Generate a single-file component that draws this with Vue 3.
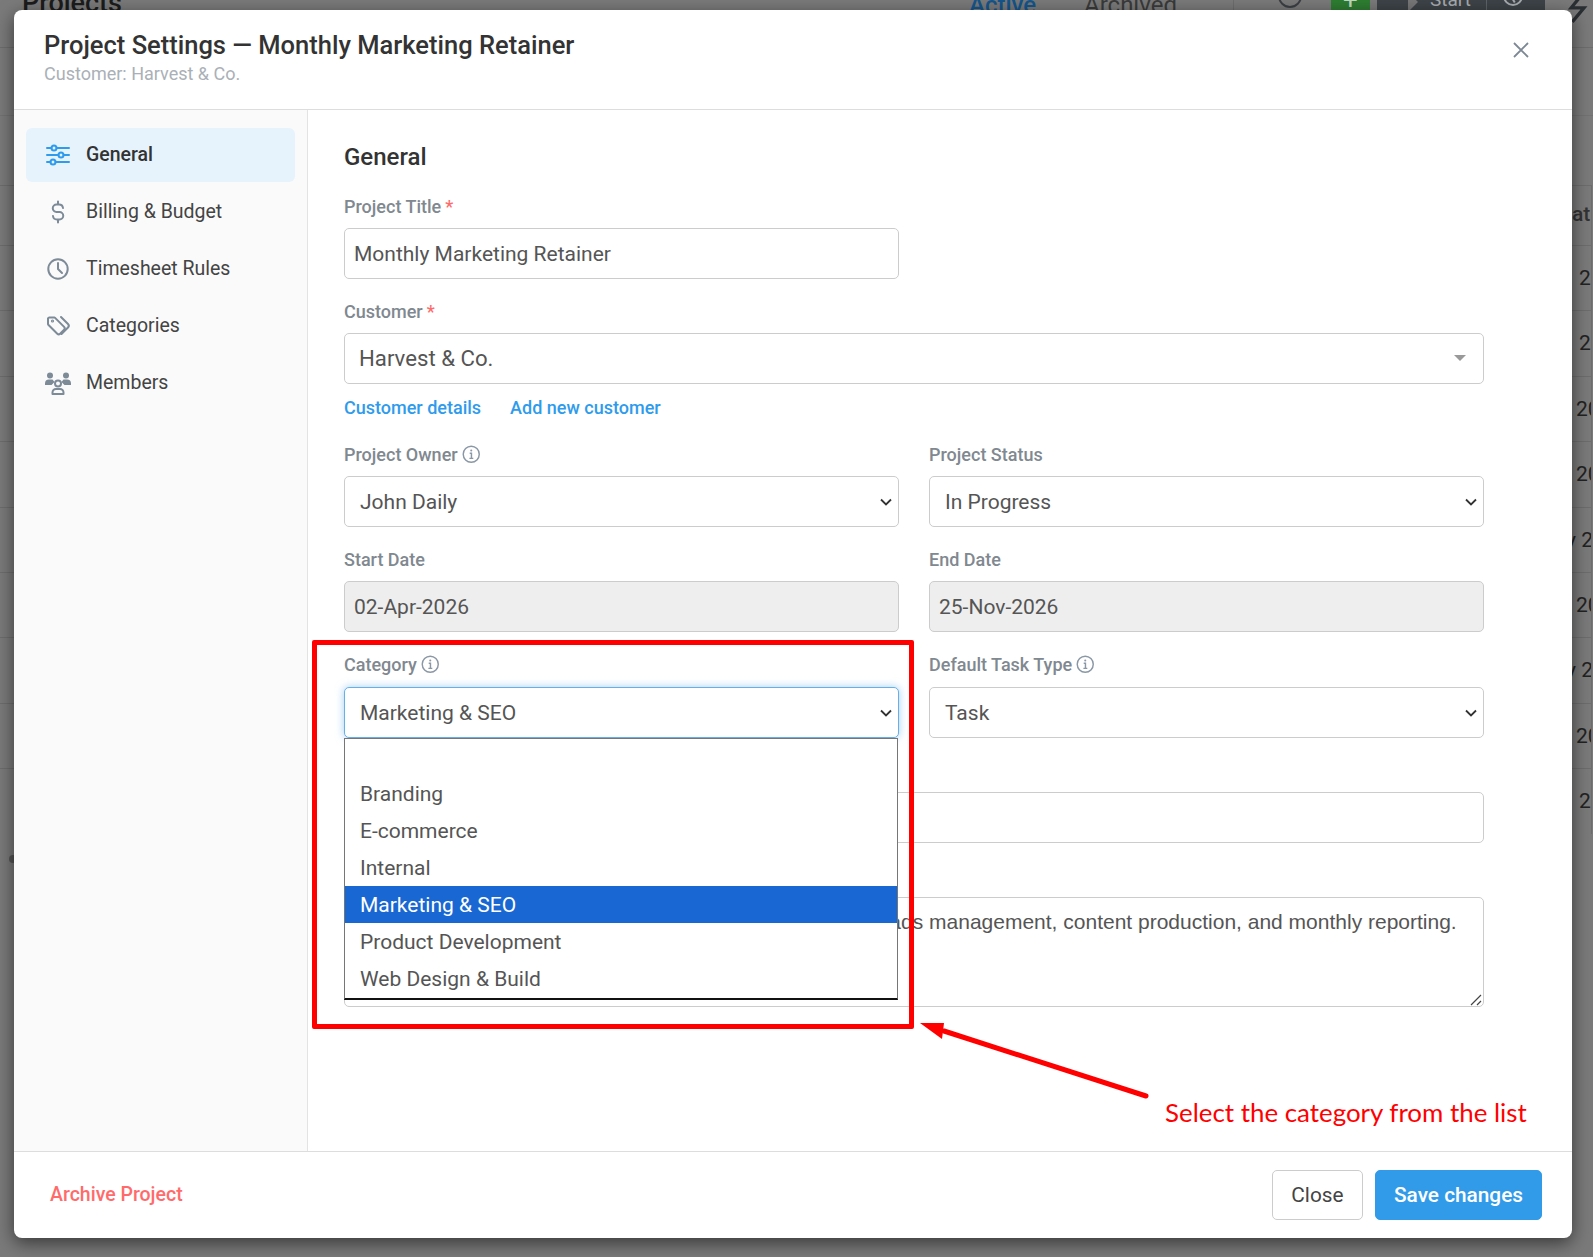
<script setup>
const navItems = [
  { name: 'General', icon: 'sliders', active: true },
  { name: 'Billing & Budget', icon: 'dollar' },
  { name: 'Timesheet Rules', icon: 'clock' },
  { name: 'Categories', icon: 'tags' },
  { name: 'Members', icon: 'users' }
]

const categories = ['', 'Branding', 'E-commerce', 'Internal', 'Marketing & SEO', 'Product Development', 'Web Design & Build']

// what peeks out to the right of the modal, in the page behind it
const rowEdges = [
  { t: 'at', x: 1572 },
  { t: '2', x: 1579 },
  { t: '2', x: 1579 },
  { t: '20', x: 1576 },
  { t: '20', x: 1576 },
  { t: 'y 2', x: 1566 },
  { t: '20', x: 1576 },
  { t: 'y 2', x: 1566 },
  { t: '20', x: 1576 },
  { t: '20', x: 1579 }
]
</script>

<template>
  <div class="page">
    <!-- page behind the dimmed backdrop -->
    <div class="behind">
      <div class="behind-bar">
        <span class="b-title">Projects</span>
        <span class="b-active">Active</span>
        <span class="b-archived">Archived</span>
        <span class="b-divider"></span>
        <span class="b-search"></span>
        <span class="b-add">+</span>
        <span class="b-start"><i class="b-play"></i>Start<i class="b-sep"></i><i class="b-clock"></i></span>
        <svg class="b-bolt" viewBox="0 0 24 24" fill="none" stroke="#2a2f33" stroke-width="2.800">
          <path d="M16 0L7 11h11L8 23" />
        </svg>
      </div>
      <div class="behind-rows">
        <div v-for="(cell, i) in rowEdges" :key="i" class="b-row" :style="{ paddingLeft: cell.x + 'px' }">{{ cell.t }}</div>
      </div>
      <span class="b-dot"></span>
    </div>

    <div class="modal">
      <header class="modal-head">
        <div>
          <h1>Project Settings — Monthly Marketing Retainer</h1>
          <p>Customer: Harvest &amp; Co.</p>
        </div>
        <svg class="close-x" viewBox="0 0 16 16" fill="none" stroke="#7d8894" stroke-width="1.800">
          <path d="M1 1l14 14M15 1L1 15" />
        </svg>
      </header>

      <div class="modal-body">
        <aside class="side">
          <a v-for="item in navItems" :key="item.name" :class="['nav-item', { active: item.active }]">
            <svg class="nav-icon" viewBox="0 0 28 28" fill="none" stroke="currentColor" stroke-width="2" stroke-linecap="round" stroke-linejoin="round">
              <template v-if="item.icon === 'sliders'">
                <circle cx="10" cy="7" r="2.500" /><path d="M3 7h4.500M12.500 7H25" />
                <circle cx="17" cy="14" r="2.500" /><path d="M3 14h11.500M19.500 14H25" />
                <circle cx="9" cy="21" r="2.500" /><path d="M3 21h3.500M11.500 21H25" />
              </template>
              <template v-else-if="item.icon === 'dollar'">
                <path d="M19 10a4 4 0 0 0-4-3.500h-2.500a3.750 3.750 0 0 0 0 7.500h3a3.750 3.750 0 0 1 0 7.500h-2.500a4 4 0 0 1-4-3.500M14 3.500v3M14 21.500v3" />
              </template>
              <template v-else-if="item.icon === 'clock'">
                <circle cx="14" cy="14" r="9.700" /><path d="M14 8v6l4 4" />
              </template>
              <template v-else-if="item.icon === 'tags'">
                <path d="M4 6.500v5.500a1 1 0 0 0 .3.700l9 9a2 2 0 0 0 2.800 0l4-4a2 2 0 0 0 0-2.800l-9-9a1 1 0 0 0-.7-.3H5.500A1.500 1.500 0 0 0 4 6.500z" />
                <path d="M17 5l7 7a2.500 2.500 0 0 1 0 3.500l-6.500 6.500" />
                <circle cx="8.500" cy="9" r=".6" />
              </template>
              <template v-else>
                <circle cx="14" cy="14.500" r="3" />
                <path d="M8.500 25v-1.500a3.500 3.500 0 0 1 3.500-3.500h4a3.500 3.500 0 0 1 3.500 3.500V25z" />
                <circle cx="6" cy="6.500" r="3" fill="currentColor" stroke="none" />
                <circle cx="22" cy="6.500" r="3" fill="currentColor" stroke="none" />
                <path d="M1 16v-1.500a4 4 0 0 1 4-4h3.500l2 2.500-3 3zM27 16v-1.500a4 4 0 0 0-4-4h-3.500l-2 2.500 3 3z" fill="currentColor" stroke="none" />
              </template>
            </svg>
            <span>{{ item.name }}</span>
          </a>
        </aside>

        <main class="content">
          <h2>General</h2>

          <div class="two">
            <div class="field">
              <label>Project Title <em>*</em></label>
              <input class="control" value="Monthly Marketing Retainer" />
            </div>
          </div>

          <div class="field">
            <label>Customer <em>*</em></label>
            <div class="control fake-select">
              <span>Harvest &amp; Co.</span>
              <i class="caret"></i>
            </div>
          </div>
          <div class="links">
            <a>Customer details</a>
            <a>Add new customer</a>
          </div>

          <div class="two">
            <div class="field">
              <label>Project Owner
                <svg class="info" viewBox="0 0 18 18"><circle cx="9" cy="9" r="7.800" /><path d="M7.500 8h1.700v4.800M7.200 13h3.800" /><circle class="dot" cx="9" cy="5.300" r="1" /></svg>
              </label>
              <select class="control">
                <option>John Daily</option>
              </select>
            </div>
            <div class="field">
              <label>Project Status</label>
              <select class="control">
                <option>In Progress</option>
              </select>
            </div>
            <div class="field">
              <label>Start Date</label>
              <input class="control" value="02-Apr-2026" disabled />
            </div>
            <div class="field">
              <label>End Date</label>
              <input class="control" value="25-Nov-2026" disabled />
            </div>
            <div class="field category">
              <label>Category
                <svg class="info" viewBox="0 0 18 18"><circle cx="9" cy="9" r="7.800" /><path d="M7.500 8h1.700v4.800M7.200 13h3.800" /><circle class="dot" cx="9" cy="5.300" r="1" /></svg>
              </label>
              <select class="control focused lower">
                <option>Marketing &amp; SEO</option>
              </select>
              <ul class="dropdown">
                <li v-for="c in categories" :key="c" :class="{ picked: c === 'Marketing & SEO' }">{{ c }}</li>
              </ul>
            </div>
            <div class="field">
              <label>Default Task Type
                <svg class="info" viewBox="0 0 18 18"><circle cx="9" cy="9" r="7.800" /><path d="M7.500 8h1.700v4.800M7.200 13h3.800" /><circle class="dot" cx="9" cy="5.300" r="1" /></svg>
              </label>
              <select class="control lower">
                <option>Task</option>
              </select>
            </div>
          </div>

          <div class="field">
            <label>Tags</label>
            <input class="control" />
          </div>
          <div class="field">
            <label>Description</label>
            <textarea class="control notes">Monthly retainer covers SEO strategy, link outreach, paid ads management, content production, and monthly reporting.</textarea>
          </div>
        </main>
      </div>

      <footer class="modal-foot">
        <a class="archive">Archive Project</a>
        <div class="foot-btns">
          <button class="btn">Close</button>
          <button class="btn primary">Save changes</button>
        </div>
      </footer>
    </div>

    <!-- screenshot annotation -->
    <div class="mark-box"></div>
    <svg class="mark-arrow" width="250" height="90" viewBox="0 0 250 90">
      <path d="M226 77L24 12" stroke="#f00" stroke-width="5" stroke-linecap="round" />
      <path d="M0 4L24 4L22 20z" fill="#f00" />
    </svg>
    <div class="mark-text">Select the category from the list</div>
  </div>
</template>

<style scoped>
.page {
  position: relative;
  width: 1593px;
  height: 1257px;
  overflow: hidden;
  background: #7a7a7a;
  font-family: Roboto, sans-serif;
  color: #444;
  padding: 10px 0 0 14px;
  box-sizing: border-box;
}

/* backdrop page */
.behind {
  position: absolute;
  inset: 0;
  overflow: hidden;
}
.behind-bar {
  position: absolute;
  top: 0;
  left: 0;
  right: 0;
  height: 47px;
  border-bottom: 1px solid #6d6d6d;
}
.behind-bar > * {
  position: absolute;
}
.b-title {
  left: 22px;
  top: -14px;
  font-size: 27px;
  font-weight: 500;
  line-height: 34px;
  color: #1c1c1c;
}
.b-active,
.b-archived {
  top: -10px;
  font-size: 24px;
  line-height: 30px;
}
.b-active {
  left: 969px;
  color: #14558c;
  font-weight: 500;
}
.b-archived {
  left: 1084px;
  color: #3a3a3a;
}
.b-divider {
  left: 1233px;
  top: 0;
  width: 1px;
  height: 47px;
  background: #6d6d6d;
}
.b-search {
  left: 1278px;
  top: -16px;
  width: 24px;
  height: 24px;
  border: 2px solid #3b3f44;
  border-radius: 50%;
  box-sizing: border-box;
}
.b-add {
  left: 1331px;
  top: -20px;
  width: 39px;
  height: 40px;
  background: #2e7d32;
  border-radius: 4px;
  color: #c0d8c0;
  font-size: 26px;
  line-height: 40px;
  text-align: center;
}
.b-start {
  left: 1377px;
  top: -20px;
  width: 168px;
  height: 40px;
  border-radius: 4px;
  background: #3d4348;
  color: #a9acaf;
  font-size: 19px;
  line-height: 40px;
  padding-left: 53px;
  box-sizing: border-box;
}
.b-start i {
  position: absolute;
}
.b-play {
  left: 31px;
  top: 12px;
  border-left: 10px solid #777;
  border-top: 10px solid transparent;
  border-bottom: 10px solid transparent;
}
.b-sep {
  left: 109px;
  top: 0;
  width: 1px;
  height: 40px;
  background: #5e6366;
}
.b-clock {
  left: 126px;
  top: 6px;
  width: 20px;
  height: 20px;
  border: 2px solid #a9acaf;
  border-radius: 50%;
  box-sizing: border-box;
}
.b-clock::after {
  content: '';
  position: absolute;
  left: 7px;
  top: 8px;
  width: 2px;
  height: 7px;
  background: #a9acaf;
  transform: rotate(-30deg);
}
.b-bolt {
  left: 1563px;
  top: -5px;
  width: 28px;
  height: 28px;
}
.behind-rows {
  position: absolute;
  top: 115px;
  left: 0;
  right: 0;
  border-top: 1px solid #727272;
  padding-top: 69px;
}
.b-row {
  width: 1592px;
  height: 65.400px;
  border-top: 1px solid #6d6d6d;
  border-right: 1px solid #6d6d6d;
  box-sizing: border-box;
  overflow: hidden;
  white-space: nowrap;
  font-size: 21px;
  line-height: 64px;
  color: #222;
}
.b-row:first-child {
  height: 60px;
  line-height: 56px;
  font-weight: 500;
  color: #333;
}
.b-dot {
  position: absolute;
  left: 9px;
  top: 855px;
  width: 8px;
  height: 8px;
  border-radius: 50%;
  background: #555;
}

/* modal */
.modal {
  position: relative;
  width: 1558px;
  height: 1228px;
  background: #fff;
  border-radius: 8px;
  box-shadow: 0 5px 18px rgba(0, 0, 0, 0.55);
  display: flex;
  flex-direction: column;
  overflow: hidden;
}
.modal-head {
  height: 100px;
  flex: none;
  box-sizing: border-box;
  border-bottom: 1px solid #ddd;
  padding: 18px 43px 0 30px;
  display: flex;
  justify-content: space-between;
  align-items: flex-start;
}
.modal-head h1 {
  margin: 0;
  font-size: 25.500px;
  line-height: 34px;
  font-weight: 500;
  color: #333;
}
.modal-head p {
  margin: 0;
  font-size: 18px;
  line-height: 24px;
  color: #aab0b7;
}
.close-x {
  width: 16px;
  height: 16px;
  margin-top: 14px;
}
.modal-body {
  flex: 1;
  display: flex;
  min-height: 0;
}
.side {
  width: 294px;
  flex: none;
  box-sizing: border-box;
  background: #fafafa;
  border-right: 1px solid #e3e3e3;
  padding: 18px 12px;
  display: flex;
  flex-direction: column;
  gap: 3px;
}
.nav-item {
  height: 54px;
  box-sizing: border-box;
  border-radius: 6px;
  padding: 0 0 1px 18px;
  display: flex;
  align-items: center;
  gap: 14px;
  font-size: 19.500px;
  color: #444;
}
.nav-item.active {
  background: #e6f3fd;
  font-weight: 500;
  color: #333;
}
.nav-icon {
  width: 28px;
  height: 28px;
  color: #7d8a97;
  flex: none;
}
.active .nav-icon {
  color: #2f9bec;
}
.content {
  flex: 1;
  min-width: 0;
  padding: 31px 88px 0 36px;
  display: flex;
  flex-direction: column;
  gap: 19px;
}
.content h2 {
  margin: 1px 0 2px;
  font-size: 24px;
  line-height: 30px;
  font-weight: 500;
  color: #333;
}
.field {
  display: flex;
  flex-direction: column;
  gap: 8px;
}
.field label {
  height: 27px;
  font-size: 18px;
  line-height: 28px;
  font-weight: 500;
  color: #808890;
  display: flex;
  align-items: center;
  gap: 4px;
}
.field label em {
  color: #ff6b6b;
  font-style: normal;
}
.control {
  height: 51px;
  width: 100%;
  box-sizing: border-box;
  border: 1px solid #ccc;
  border-radius: 5px;
  background: #fff;
  font-family: Roboto, sans-serif;
  font-size: 21px;
  color: #555;
  padding: 0 9px;
  outline: none;
}
.control:disabled {
  background: #eee;
  color: #555;
  opacity: 1;
}
select.control {
  appearance: none;
  padding: 0 30px 0 15px;
  background-image: url("data:image/svg+xml,%3Csvg xmlns='http://www.w3.org/2000/svg' width='12' height='8' fill='none' stroke='%23333' stroke-width='1.800'%3E%3Cpath d='M1 1.500l5 5 5-5'/%3E%3C/svg%3E");
  background-repeat: no-repeat;
  background-position: right 6px center;
}
.lower {
  margin-top: 1px;
}
.focused {
  border-color: #66afe9;
  box-shadow: 0 0 8px rgba(102, 175, 233, 0.6);
}
.fake-select {
  display: flex;
  align-items: center;
  justify-content: space-between;
  font-size: 22.200px;
  padding: 0 17px 2px 14px;
}
.caret {
  border-top: 6px solid #999;
  border-left: 6px solid transparent;
  border-right: 6px solid transparent;
}
.links {
  margin: -8px 0 1px;
  display: flex;
  gap: 29px;
  font-size: 18px;
  line-height: 26px;
  font-weight: 500;
  color: #2f9bec;
}
.two {
  display: grid;
  grid-template-columns: 1fr 1fr;
  gap: 19px 30px;
}
.category {
  position: relative;
}
.dropdown {
  position: absolute;
  top: 100%;
  left: 0;
  right: 1px;
  z-index: 3;
  margin: 0;
  padding: 0 0 1px;
  list-style: none;
  background: #fff;
  border: 1px solid #767676;
  border-bottom: 2px solid #111;
  font-size: 21px;
  color: #555;
}
.dropdown li {
  height: 37px;
  line-height: 39px;
  padding-left: 15px;
}
.dropdown li:first-child {
  height: 36px;
}
.dropdown .picked {
  background: #1967d2;
  color: #fff;
}
.notes {
  height: 110px;
  padding: 10px 9px;
  font-family: 'Liberation Sans', sans-serif;
  line-height: 28px;
}
.notes::-webkit-resizer {
  background: url("data:image/svg+xml,%3Csvg xmlns='http://www.w3.org/2000/svg' width='15' height='15' fill='none' stroke='%23444' stroke-width='1.200'%3E%3Cpath d='M3 14L13 4M9 14l4-4'/%3E%3C/svg%3E") no-repeat;
}
.info {
  width: 18.500px;
  height: 18.500px;
  fill: none;
  stroke: #8a97a5;
  stroke-width: 1.400;
}
.info .dot {
  fill: #8a97a5;
  stroke: none;
}
.modal-foot {
  height: 87px;
  flex: none;
  box-sizing: border-box;
  border-top: 1px solid #ddd;
  padding: 0 30px 0 36px;
  display: flex;
  justify-content: space-between;
  align-items: center;
}
.archive {
  font-size: 19.500px;
  font-weight: 500;
  color: #ff6b6b;
  padding-bottom: 2px;
}
.foot-btns {
  display: flex;
  gap: 12px;
}
.btn {
  height: 50px;
  padding: 0 18.500px;
  background: #fff;
  border: 1px solid #ccc;
  border-radius: 5px;
  font-family: Roboto, sans-serif;
  font-size: 20.800px;
  color: #444;
}
.btn.primary {
  background: #319bea;
  border-color: #319bea;
  color: #fff;
  font-weight: 500;
  padding: 0 18px;
}

/* annotation */
.mark-box {
  position: absolute;
  left: 312px;
  top: 640px;
  width: 602px;
  height: 389px;
  box-sizing: border-box;
  border: 5px solid #f00;
  border-radius: 2px;
}
.mark-arrow {
  position: absolute;
  left: 920px;
  top: 1019px;
}
.mark-text {
  position: absolute;
  left: 1165px;
  top: 1095px;
  font-family: Lato, sans-serif;
  font-size: 25.900px;
  line-height: 34px;
  color: #f00;
  white-space: nowrap;
}
</style>

<style>
body {
  background: #7a7a7a;
}
</style>
